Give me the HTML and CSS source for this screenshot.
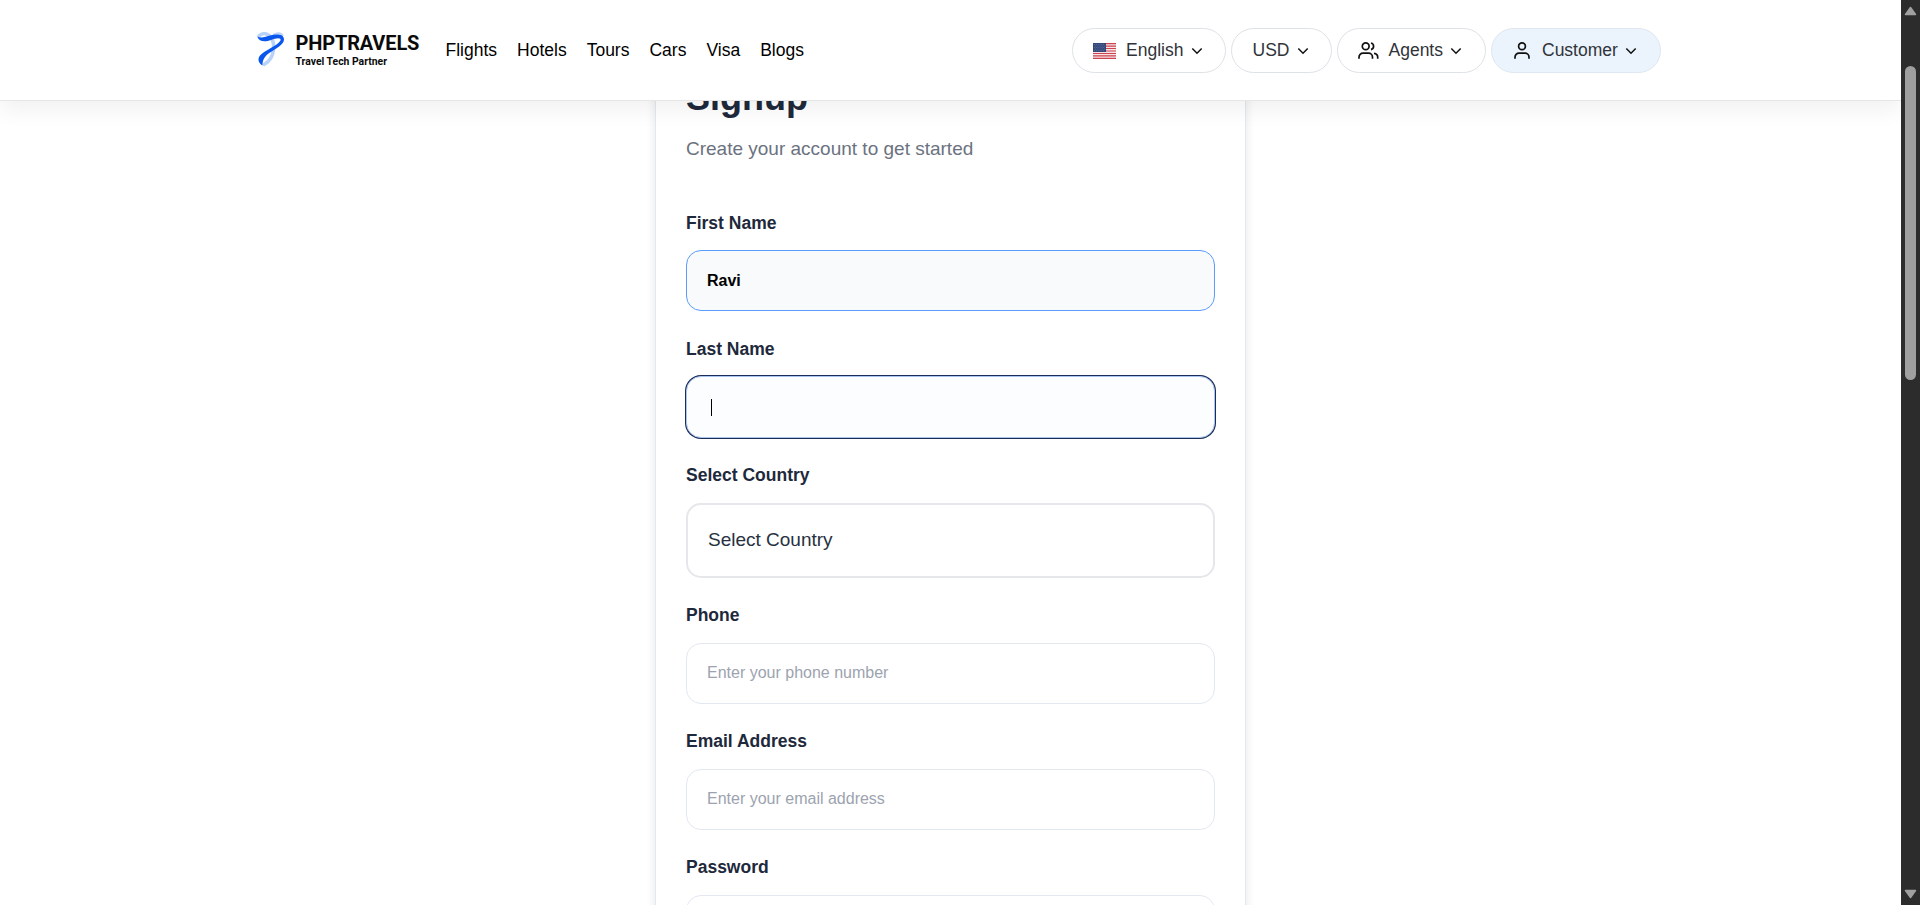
FILE: index.html
```html
<!DOCTYPE html>
<html lang="en">
<head>
<meta charset="utf-8">
<title>Signup - PHPTRAVELS</title>
<link rel="stylesheet" href="styles.css">
</head>
<body>
<div class="viewport">
  <div class="page">
    <header class="header">
      <div class="brand">
        <svg class="brand-mark" width="28" height="36" viewBox="0 0 28 36" fill="none">
          <path d="M2 4C5 1 9 1 12 3.500C19 9 18.500 26 7.500 32.300" stroke="#b9d2f8" stroke-width="3.600" stroke-linecap="round"/>
          <path d="M16 3C20 .8 24 1 26 4" stroke="#b9d2f8" stroke-width="2"/>
          <path d="M.3 4.500C4 6.500 8 5 14 3.300C19 1.800 27 1.500 27 7.500C27 13 18 17 13 20.500C8 24 5.500 27 5.500 33.500C1 31 .5 26.500 3 23.500C8 18 21 13.500 23.500 8.500C24.500 5 19 6 14 8C8 10.300 2 10 .3 4.500Z" fill="#0a57ee"/>
        </svg>
        <div class="brand-text">
          <span class="brand-name">PHPTRAVELS</span>
          <span class="brand-tag">Travel Tech Partner</span>
        </div>
      </div>
      <nav class="nav"><a>Flights</a><a>Hotels</a><a>Tours</a><a>Cars</a><a>Visa</a><a>Blogs</a></nav>
      <div class="actions">
        <button class="pill pill-lang">
          <svg class="flag" width="23" height="16" viewBox="0 0 23 16">
            <path fill="#f7e3e5" d="M0 0h23v16H0z"/>
            <path stroke="#cc4450" stroke-width="1.200" d="M0 .6h23M0 3.100h23M0 5.500h23M0 8h23M0 10.500h23M0 12.900h23M0 15.400h23"/>
            <path fill="#34487c" d="M0 0h13v9H0z"/>
            <path stroke="#7583a8" stroke-width=".6" stroke-dasharray="1 1.200" d="M1 1.500h11M2 3h10M1 4.500h11M2 6h10M1 7.500h11"/>
          </svg>
          <span>English</span>
          <svg class="chev" width="12" height="8" viewBox="0 0 12 8"><path d="M1.300 1.500L6 6.200l4.700-4.700"/></svg>
        </button>
        <button class="pill pill-cur">
          <span>USD</span>
          <svg class="chev" width="12" height="8" viewBox="0 0 12 8"><path d="M1.300 1.500L6 6.200l4.700-4.700"/></svg>
        </button>
        <button class="pill pill-agents">
          <svg class="ico" width="21" height="17" viewBox="0 0 21 17"><circle cx="7.700" cy="4.300" r="3.400"/><path d="M1 16.700v-1.500a4 4 0 0 1 4-4h5.500a4 4 0 0 1 4 4v1.500M13 1a3.400 3.400 0 0 1 0 6.600M16 11.300a4 4 0 0 1 3.700 4v1.400"/></svg>
          <span>Agents</span>
          <svg class="chev" width="12" height="8" viewBox="0 0 12 8"><path d="M1.300 1.500L6 6.200l4.700-4.700"/></svg>
        </button>
        <button class="pill pill-customer">
          <svg class="ico" width="16" height="17" viewBox="0 0 16 17"><circle cx="8" cy="4.300" r="3.400"/><path d="M1 16.700v-1.500a4 4 0 0 1 4-4h6a4 4 0 0 1 4 4v1.500"/></svg>
          <span>Customer</span>
          <svg class="chev" width="12" height="8" viewBox="0 0 12 8"><path d="M1.300 1.500L6 6.200l4.700-4.700"/></svg>
        </button>
      </div>
    </header>
    <main class="main">
      <section class="card">
        <h1 class="title">Signup</h1>
        <p class="subtitle">Create your account to get started</p>
        <div class="field"><label class="label">First Name</label><div class="input input-filled">Ravi</div></div>
        <div class="field"><label class="label">Last Name</label><div class="input input-focus"><span class="caret"></span></div></div>
        <div class="field"><label class="label label-high">Select Country</label><div class="input select">Select Country</div></div>
        <div class="field"><label class="label label-high">Phone</label><div class="input">Enter your phone number</div></div>
        <div class="field"><label class="label label-high">Email Address</label><div class="input">Enter your email address</div></div>
        <div class="field"><label class="label label-high">Password</label><div class="input"></div></div>
      </section>
    </main>
  </div>
  <div class="scrollbar">
    <svg class="arrow" width="13" height="10" viewBox="0 0 13 10"><path d="M6.500 1.500L11.500 8.500H1.500Z"/></svg>
    <div class="thumb"></div>
    <svg class="arrow arrow-down" width="13" height="10" viewBox="0 0 13 10"><path d="M6.500 8.500L11.500 1.500H1.500Z"/></svg>
  </div>
</div>
</body>
</html>
```
FILE: styles.css
```css
* { box-sizing: border-box; }
body { margin: 0; overflow: hidden; font-family: "Liberation Sans", Arial, sans-serif; background: #fff; }
.viewport { display: flex; height: 905px; overflow: hidden; }
.page { flex: 1; display: flex; flex-direction: column; overflow: hidden; }

.header {
  position: relative;
  z-index: 2;
  flex: none;
  height: 101px;
  padding: 1px 240px 0 257px;
  display: flex;
  align-items: center;
  background: #fff;
  border-bottom: 1px solid #e6e6e6;
  box-shadow: 0 10px 20px rgba(0, 0, 0, .055);
}
.brand { display: flex; align-items: center; width: 188.500px; }
.brand-mark { flex: none; margin: 0 10.500px 2px 0; }
.brand-text { display: flex; flex-direction: column; font-family: Roboto, sans-serif; color: #0b0b0b; padding-top: 1px; }
.brand-name { font-size: 20px; font-weight: 700; line-height: 21px; letter-spacing: -.15px; }
.brand-tag { font-size: 10.400px; font-weight: 700; line-height: 15px; }
.nav { display: flex; gap: 20px; font-size: 17.500px; color: #000; }
.actions { display: flex; gap: 5px; margin-left: auto; }
.pill {
  display: flex;
  align-items: center;
  height: 45px;
  padding: 0 0 0 20px;
  border: 1px solid #dee2e6;
  border-radius: 25px;
  background: #fff;
  color: #30343a;
  font: 17.500px "Liberation Sans", Arial, sans-serif;
}
.pill-lang { width: 154px; }
.pill-cur { width: 101px; padding-left: 20.500px; }
.pill-agents { width: 149px; }
.pill-customer { width: 170px; background: #ebf3fc; border-color: #dfe7f0; padding-left: 22px; }
.flag { margin-right: 10px; }
.ico { margin-right: 9.500px; fill: none; stroke: #111; stroke-width: 1.700; }
.pill-customer .ico { margin-right: 12px; }
.chev { margin-left: 7.500px; fill: none; stroke: #111; stroke-width: 1.500; }

.main { flex: none; display: flex; justify-content: center; margin-top: -41px; }
.card {
  width: 591px;
  height: 1100px;
  padding: 14px 30px 0;
  border: 1px solid #e2e8f0;
  background: #fff;
  box-shadow: 0 0 10px rgba(0, 0, 0, .1);
}
.title { margin: 0; font-size: 36px; line-height: 46px; color: #1e293b; }
.subtitle { margin: 14px 0 0; font-size: 19px; line-height: 28px; color: #6b7280; }
.field { margin-bottom: 26px; }
.subtitle + .field { margin-top: 48px; }
.label { display: block; height: 39px; font-size: 17.500px; line-height: 24px; font-weight: 700; color: #1e293b; }
.label-high { line-height: 22px; }
.input {
  display: flex;
  align-items: center;
  height: 61px;
  padding: 0 20px 2px;
  border: 1px solid #e2e8f0;
  border-radius: 15px;
  font-size: 16px;
  color: #9ca3af;
}
.input-filled { background: #f8fafc; border-color: #5a9bfb; color: #000; font-weight: 700; padding-bottom: 0; }
.input-focus { height: 62px; background: #fcfdff; border-color: #a9c4ef; box-shadow: 0 0 0 1px #1b2d59; padding: 0 24px; }
.caret { width: 1px; height: 17px; background: #000; }
.select { height: 75px; border: 2px solid #e5e7eb; padding: 0 20px 1px; font-size: 19px; color: #273142; }

.scrollbar {
  width: 19px;
  flex: none;
  display: flex;
  flex-direction: column;
  align-items: center;
  padding: 6px 0;
  background: #2c2c2c;
}
.arrow { flex: none; fill: #a0a0a0; stroke: #a0a0a0; stroke-width: 1.500; stroke-linejoin: round; }
.arrow-down { margin-top: auto; }
.thumb { width: 11px; height: 314px; margin-top: 50px; border-radius: 6px; background: #9f9f9f; }
```
